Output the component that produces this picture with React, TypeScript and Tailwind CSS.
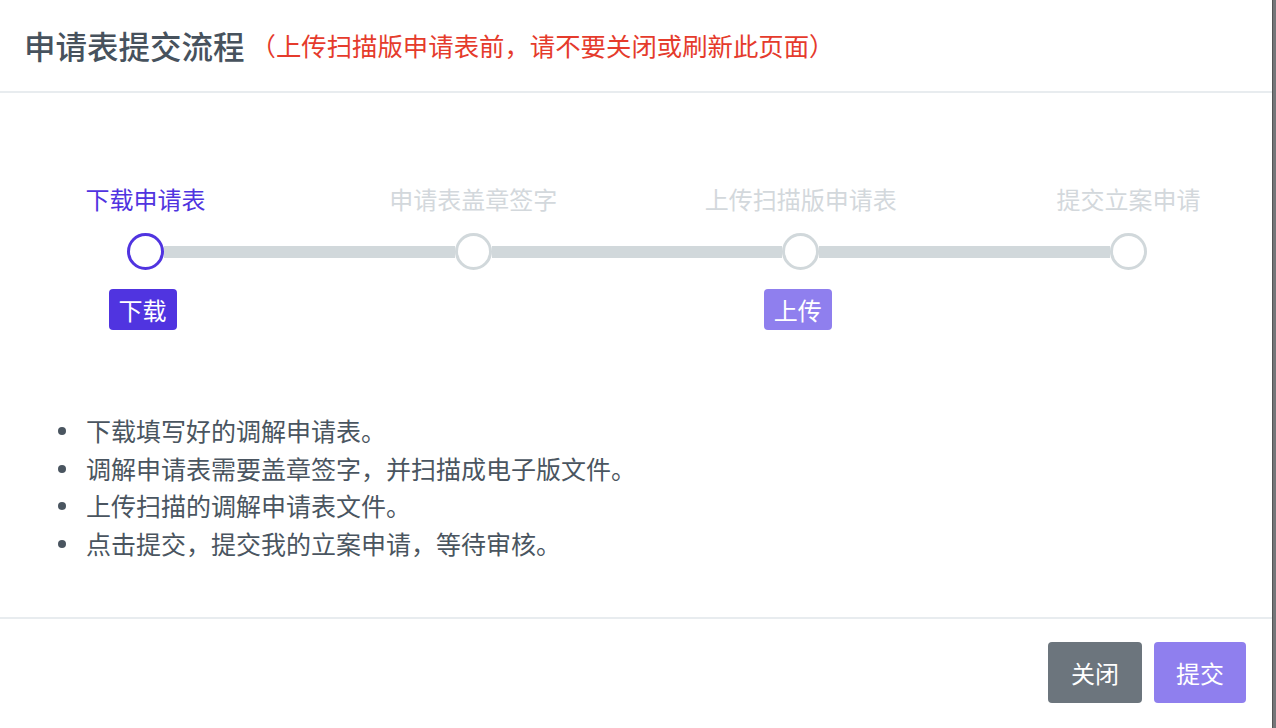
import React from 'react';

const steps = [
  { label: '下载申请表', active: true, action: '下载' },
  { label: '申请表盖章签字' },
  { label: '上传扫描版申请表', action: '上传' },
  { label: '提交立案申请' },
];

const notes = [
  '下载填写好的调解申请表。',
  '调解申请表需要盖章签字，并扫描成电子版文件。',
  '上传扫描的调解申请表文件。',
  '点击提交，提交我的立案申请，等待审核。',
];

export default function App() {
  return (
    <div className="flex h-[728px] w-[1276px] overflow-hidden font-['Noto_Sans_CJK_SC','Noto_Sans',sans-serif]">
      <div className="flex w-[1272px] flex-col bg-white">
        <header className="flex h-[93px] items-center border-b-2 border-[#e8ecef] pl-6">
          <h1 className="text-[31.5px] font-medium leading-none text-[#47525d]">申请表提交流程</h1>
          <span className="ml-[6px] text-[25.4px] leading-none text-[#e53b2c]">
            （上传扫描版申请表前，请不要关闭或刷新此页面）
          </span>
        </header>

        <main className="flex-1">
          <div className="pl-[127px] pr-[125px] pt-[90px]">
            <div className="flex justify-between">
              {steps.map(s => (
                <div key={s.label} className="flex w-[37px] justify-center">
                  <span
                    className={
                      'whitespace-nowrap text-[24px] leading-[32px] ' +
                      (s.active ? 'text-[#5034e0]' : 'text-[#d3d8dc]')
                    }>
                    {s.label}
                  </span>
                </div>
              ))}
            </div>

            <div className="mt-[18px] flex items-center">
              {steps.map((s, i) => (
                <React.Fragment key={s.label}>
                  {i > 0 && <div className="h-3 flex-1 bg-[#d1d8db]" />}
                  <div
                    className={
                      'h-[37px] w-[37px] shrink-0 rounded-full border-[3px] bg-white ' +
                      (s.active ? 'border-[#5034e0]' : 'border-[#d1d8db]')
                    }
                  />
                </React.Fragment>
              ))}
            </div>

            <div className="mt-[19px] flex h-[41px] justify-between">
              {steps.map(s => (
                <div key={s.label} className="flex w-[37px] justify-center">
                  {s.action && (
                    <button
                      className={
                        'mr-[6px] h-[41px] shrink-0 whitespace-nowrap rounded-[4px] px-[10px] text-[24px] leading-none text-white ' +
                        (s.active ? 'bg-[#5034e0]' : 'bg-[#8f7fee]')
                      }>
                      {s.action}
                    </button>
                  )}
                </div>
              ))}
            </div>
          </div>

          <ul className="mt-[82px] pl-[58px]">
            {notes.map(n => (
              <li key={n} className="flex h-[37.7px] items-center text-[25px] text-[#4a5560]">
                <span className="mr-5 h-2 w-2 shrink-0 rounded-full bg-[#4a5560]" />
                {n}
              </li>
            ))}
          </ul>
        </main>

        <footer className="flex h-[111px] items-start justify-end gap-3 border-t-2 border-[#e8ecef] pr-[26px] pt-[23px]">
          <button className="h-[61px] w-[94px] rounded-[4px] bg-[#6c757d] text-[24px] text-white">关闭</button>
          <button className="h-[61px] w-[92px] rounded-[4px] bg-[#8f7fee] text-[24px] text-white">提交</button>
        </footer>
      </div>
      <div className="w-1 border-l border-[#555] bg-[#747679]" />
    </div>
  );
}
